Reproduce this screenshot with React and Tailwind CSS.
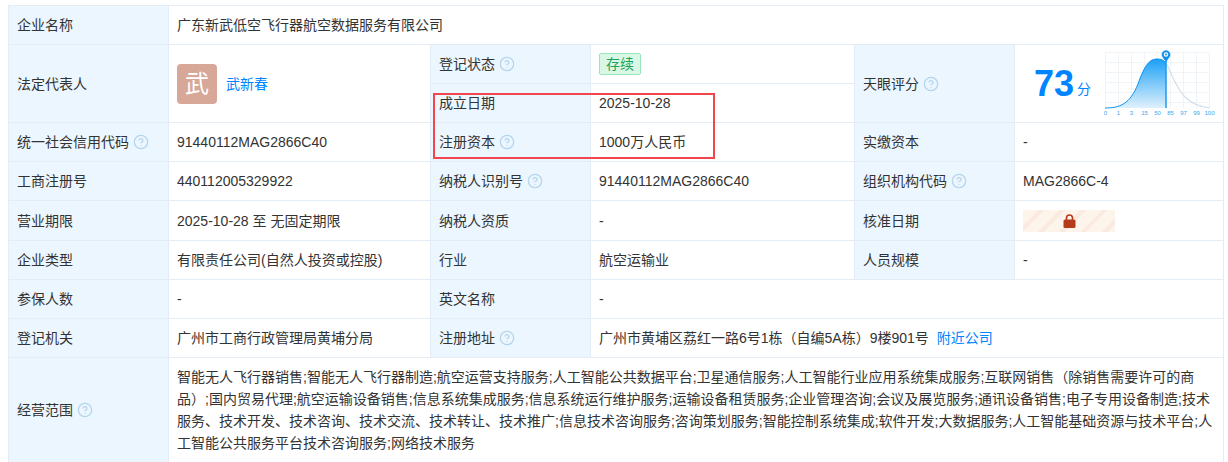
import React from "react";
import { CircleHelp } from "lucide-react";

const labelCls = "bg-[#ecf6fe] border border-[#e4edf5] px-2 text-left font-normal";
const valueCls = "border border-[#e4edf5] px-2 text-left font-normal";

function Help() {
  return <CircleHelp className="inline-block w-4 h-4 ml-1 -mt-[2px] text-[#b5d5ec]" strokeWidth={1.9} />;
}

function Row({ cells, tall }) {
  return (
    <tr className={tall ? "h-[40px]" : "h-[39px]"}>
      {cells.map((c, i) =>
        i % 2 === 0 ? (
          <th key={i} className={labelCls}>{c.label}{c.help && <Help />}</th>
        ) : (
          <td key={i} className={valueCls}>{c}</td>
        )
      )}
    </tr>
  );
}

function ScoreChart() {
  const xs = [0, 13, 26, 39, 52, 65, 78, 91, 104];
  const ys = [3, 13, 23, 33, 43, 53];
  const ticks = ["0", "1", "3", "15", "50", "85", "97", "99", "100"];
  return (
    <svg width="110" height="70" viewBox="0 0 110 70" className="shrink-0 ml-[14px] overflow-visible">
      <defs>
        <linearGradient id="hump" x1="0" y1="0" x2="0" y2="1">
          <stop offset="0" stopColor="#1ba0f6" />
          <stop offset="1" stopColor="#dff1fd" />
        </linearGradient>
      </defs>
      {xs.map((x) => <line key={x} x1={x + 0.5} y1="3" x2={x + 0.5} y2="59" stroke="#eff4f9" />)}
      {ys.map((y) => <line key={y} x1="0" y1={y + 0.5} x2="105" y2={y + 0.5} stroke="#eff4f9" />)}
      <path d="M61 14C66 22 70 38 80 48C88 56 96 58 105 59" fill="none" stroke="#d3dfe8" strokeWidth="1.2" />
      <path d="M0 59C15 59 25 55 33 35C40 15 45 10 52 10C56 10 59 11 61 14L61 59Z" fill="url(#hump)" />
      <path d="M0 59C15 59 25 55 33 35C40 15 45 10 52 10C56 10 59 11 61 14" fill="none" stroke="#0c93f3" strokeWidth="1" />
      <line x1="61" y1="12" x2="61" y2="59" stroke="#1b98f5" strokeWidth="1.5" />
      <path d="M61 13L57.6 8.2A4.2 4.2 0 1 1 64.4 8.2Z" fill="#0f8ff0" />
      <circle cx="61" cy="5.5" r="2.2" fill="#fff" />
      <circle cx="61" cy="5.5" r="1" fill="#0f8ff0" />
      {ticks.map((t, i) => (
        <text key={t} x={i * 13 + 0.5} y="66" fontSize="6" textAnchor="middle" fill="#3aa7f2">{t}</text>
      ))}
    </svg>
  );
}

function Locked() {
  return (
    <div className="w-[92px] h-[22px] flex items-center justify-center bg-[repeating-linear-gradient(135deg,#fdf4ec_0,#fdf4ec_11px,#faeadf_11px,#faeadf_15px)]">
      <svg width="13" height="14" viewBox="0 0 13 14">
        <path d="M3.5 6V4a3 3 0 0 1 6 0v2" fill="none" stroke="#b43c1b" strokeWidth="1.6" />
        <rect x="0.5" y="5.5" width="12" height="8.5" rx="1.5" fill="#b43c1b" />
      </svg>
    </div>
  );
}

const scope =
  "智能无人飞行器销售;智能无人飞行器制造;航空运营支持服务;人工智能公共数据平台;卫星通信服务;人工智能行业应用系统集成服务;互联网销售（除销售需要许可的商品）;国内贸易代理;航空运输设备销售;信息系统集成服务;信息系统运行维护服务;运输设备租赁服务;企业管理咨询;会议及展览服务;通讯设备销售;电子专用设备制造;技术服务、技术开发、技术咨询、技术交流、技术转让、技术推广;信息技术咨询服务;咨询策划服务;智能控制系统集成;软件开发;大数据服务;人工智能基础资源与技术平台;人工智能公共服务平台技术咨询服务;网络技术服务";

export default function App() {
  return (
    <div className="relative h-[462px] overflow-hidden bg-white pt-[5px] pl-2 text-[14px] leading-[22px] text-[#333] font-['Liberation_Sans','Noto_Sans_CJK_SC',sans-serif]">
      <table className="table-fixed border-collapse w-[1215px]">
        <colgroup>
          <col className="w-[160px]" />
          <col className="w-[262px]" />
          <col className="w-[160px]" />
          <col className="w-[264px]" />
          <col className="w-[160px]" />
          <col className="w-[209px]" />
        </colgroup>
        <tbody>
          <tr className="h-[39px]">
            <th className={labelCls}>企业名称</th>
            <td className={valueCls} colSpan={5}>广东新武低空飞行器航空数据服务有限公司</td>
          </tr>
          <tr className="h-[39px]">
            <th className={labelCls} rowSpan={2}>法定代表人</th>
            <td className={valueCls} rowSpan={2}>
              <div className="flex items-center">
                <div className="w-10 h-10 rounded bg-[#d7a797] text-white text-[24px] flex items-center justify-center font-['Liberation_Serif','Noto_Sans_CJK_SC',serif]">武</div>
                <a className="ml-[9px] text-[#0084ff]">武新春</a>
              </div>
            </td>
            <th className={labelCls}>登记状态<Help /></th>
            <td className={valueCls}>
              <span className="inline-flex items-center justify-center w-[42px] h-[22px] border border-[#9be5bb] bg-[#d8f8e5] text-[#1fa35c] rounded-[2px]">存续</span>
            </td>
            <th className={labelCls} rowSpan={2}>天眼评分<Help /></th>
            <td className={valueCls} rowSpan={2}>
              <div className="flex items-center justify-start pl-[11px]">
                <span className="text-[36px] leading-none font-bold text-[#0084ff]">73</span>
                <span className="ml-[3px] mt-[10px] text-[#0084ff]">分</span>
                <ScoreChart />
              </div>
            </td>
          </tr>
          <tr className="h-[39px]">
            <th className={labelCls}>成立日期</th>
            <td className={valueCls}>2025-10-28</td>
          </tr>
          <Row cells={[{ label: "统一社会信用代码", help: true }, "91440112MAG2866C40", { label: "注册资本", help: true }, "1000万人民币", { label: "实缴资本" }, "-"]} />
          <Row cells={[{ label: "工商注册号" }, "440112005329922", { label: "纳税人识别号", help: true }, "91440112MAG2866C40", { label: "组织机构代码", help: true }, "MAG2866C-4"]} />
          <Row tall cells={[{ label: "营业期限" }, "2025-10-28 至 无固定期限", { label: "纳税人资质" }, "-", { label: "核准日期" }, <Locked />]} />
          <Row cells={[{ label: "企业类型" }, "有限责任公司(自然人投资或控股)", { label: "行业" }, "航空运输业", { label: "人员规模" }, "-"]} />
          <tr className="h-[39px]">
            <th className={labelCls}>参保人数</th>
            <td className={valueCls}>-</td>
            <th className={labelCls}>英文名称</th>
            <td className={valueCls} colSpan={3}>-</td>
          </tr>
          <tr className="h-[39px]">
            <th className={labelCls}>登记机关</th>
            <td className={valueCls}>广州市工商行政管理局黄埔分局</td>
            <th className={labelCls}>注册地址<Help /></th>
            <td className={valueCls} colSpan={3}>
              广州市黄埔区荔红一路6号1栋（自编5A栋）9楼901号<a className="ml-2 text-[#0084ff]">附近公司</a>
            </td>
          </tr>
          <tr>
            <th className={`${labelCls} pb-[2px]`}>经营范围<Help /></th>
            <td className={`${valueCls} pt-[8px] pb-[10px]`} colSpan={5}>{scope}</td>
          </tr>
        </tbody>
      </table>
      <div className="absolute left-[433px] top-[93px] w-[282px] h-[66px] border-2 border-[#f2454d]" />
    </div>
  );
}
